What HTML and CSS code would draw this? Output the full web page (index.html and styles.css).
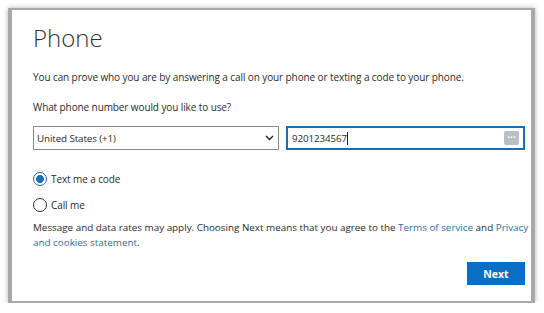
FILE: index.html
```html
<!DOCTYPE html>
<html lang="en">
<head>
  <meta charset="UTF-8">
  <title>Phone</title>
  <link rel="stylesheet" href="styles.css">
</head>
<body>
  <div class="frame">
    <h1 class="title">Phone</h1>
    <p class="intro">You can prove who you are by answering a call on your phone or texting a code to your phone.</p>
    <p class="question">What phone number would you like to use?</p>

    <div class="phone-row">
      <div class="select">
        <span>United States (+1)</span>
        <svg class="chevron" width="9" height="6" viewBox="0 0 9 6">
          <path d="M1 1 L4.5 4.5 L8 1" fill="none" stroke="#222" stroke-width="1.4"/>
        </svg>
      </div>
      <div class="number">
        <span>9201234567</span><span class="caret"></span>
        <span class="dots">&middot;&middot;&middot;</span>
      </div>
    </div>

    <div class="options">
      <label class="radio checked"><span class="circle"></span>Text me a code</label>
      <label class="radio"><span class="circle"></span>Call me</label>
    </div>

    <p class="terms">Message and data rates may apply. Choosing Next means that you agree to the <a href="#">Terms of service</a> and <a href="#"><span>Privacy</span> <span>and cookies statement</span></a>.</p>

    <div class="actions">
      <button>Next</button>
    </div>
  </div>
</body>
</html>
```

FILE: styles.css
```css
* {
  margin: 0;
  padding: 0;
  box-sizing: border-box;
}

body {
  background: #fff;
  font-family: "Segoe UI", "Open Sans", sans-serif;
  color: #2b2b2b;
  font-size: 10px;
  letter-spacing: -0.1px;
}

.frame {
  margin: 8px 0 0 8px;
  width: 527px;
  height: 295px;
  background: #fff;
  border-style: solid;
  border-color: #a8a8a8;
  border-width: 2px 4px 2px 4px;
  box-shadow: 0 0 5px rgba(0, 0, 0, 0.3);
  padding: 13px 6px 0 21px;
}

.title {
  font-size: 24px;
  font-weight: 300;
  line-height: 30px;
  color: #333;
  letter-spacing: 0;
}

.intro {
  margin-top: 16px;
  line-height: 16px;
}

.question {
  margin-top: 14px;
  line-height: 16px;
}

.phone-row {
  display: flex;
  gap: 7px;
  margin-top: 11px;
}

.select {
  width: 246px;
  height: 24px;
  border: 1px solid #8a8a8a;
  display: flex;
  align-items: center;
  justify-content: space-between;
  padding: 0 4px 0 3px;
  font-size: 9.8px;
}

.number {
  flex: 1;
  height: 24px;
  border: 2px solid #1a6eb5;
  display: flex;
  align-items: center;
  padding: 0 4px 0 4px;
  font-size: 9.8px;
}

.caret {
  width: 1px;
  height: 13px;
  background: #222;
}

.dots {
  margin-left: auto;
  width: 15px;
  height: 14px;
  border-radius: 2px;
  background: #b9bec7;
  color: #fff;
  font-size: 10px;
  line-height: 13px;
  text-align: center;
  font-weight: bold;
  letter-spacing: 0;
}

.options {
  margin-top: 22px;
  display: flex;
  flex-direction: column;
  gap: 12px;
}

.radio {
  display: flex;
  align-items: center;
  gap: 4px;
  height: 14px;
}

.circle {
  width: 14px;
  height: 14px;
  border-radius: 50%;
  border: 1px solid #333;
  background: #fff;
}

.checked .circle {
  border-color: #1a6eb5;
  background: radial-gradient(circle, #1a6eb5 0 3.6px, #fff 4.2px);
}

.terms {
  margin-top: 8px;
  margin-right: -8px;
  line-height: 15px;
  font-size: 9.85px;
  letter-spacing: 0;
}

.terms a {
  color: #2c6ea8;
  text-decoration: none;
}

.actions {
  display: flex;
  justify-content: flex-end;
  margin-top: 12px;
}

button {
  width: 58px;
  height: 23px;
  border: none;
  background: #0b6ec5;
  color: #fff;
  font-family: inherit;
  font-size: 10.5px;
  font-weight: bold;
}
```
